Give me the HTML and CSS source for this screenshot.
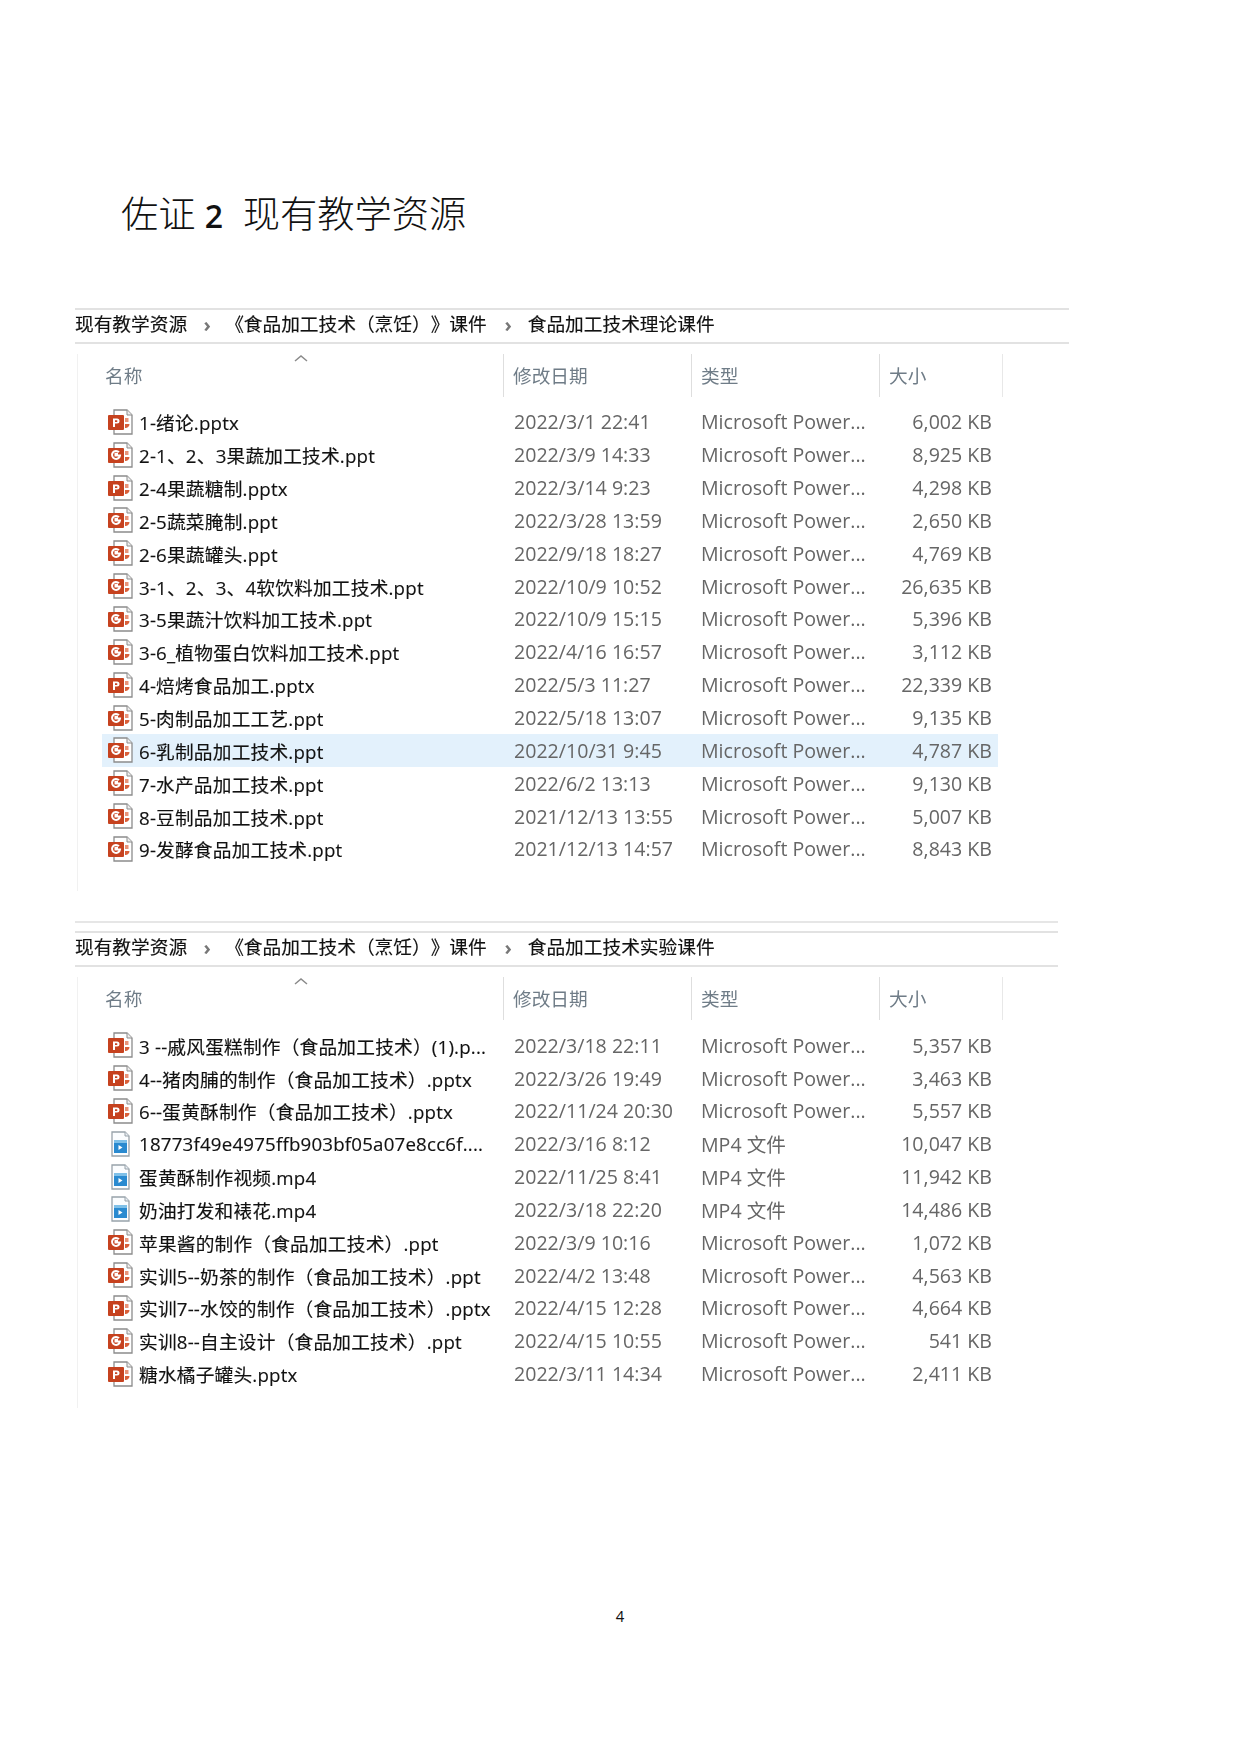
FILE: index.html
```html
<!DOCTYPE html>
<html lang="zh-CN">
<head>
<meta charset="utf-8">
<title>佐证 2 现有教学资源</title>
<link rel="stylesheet" href="styles.css">
</head>
<body>
<svg class="defs" width="0" height="0" aria-hidden="true">
  <symbol id="doc" viewBox="0 0 28 26">
    <path d="M8 1h13l5 5v19H8z" fill="#fff" stroke="#8c8c8c" stroke-width="1.300"/>
    <path d="M21 1v5h5" fill="#eee" stroke="#8c8c8c" stroke-width="1"/>
    <path d="M19 9h3.500v4h-3.500z" fill="#e8957a"/>
    <path d="M19 15h4.500a4 4 0 0 1-4.500 4z" fill="#d9603a"/>
    <rect x="2" y="6" width="16" height="15" rx="1" fill="#c6421f"/>
  </symbol>
  <symbol id="pptx" viewBox="0 0 28 26">
    <use href="#doc"/>
    <path d="M7 9.500h4a2.500 2.500 0 0 1 0 5h-2v3.500h-2zM9 11.200v1.700h1.600a.85.85 0 0 0 0-1.700z" fill="#fff"/>
  </symbol>
  <symbol id="ppt" viewBox="0 0 28 26">
    <use href="#doc"/>
    <path d="M13 10.200a4 4 0 1 0 1 3.300h-4.500v-1.800h2.500" fill="none" stroke="#fff" stroke-width="2"/>
  </symbol>
  <symbol id="mp4" viewBox="0 0 28 26">
    <path d="M6 1h13l4 4v20H6z" fill="#fbfdff" stroke="#98a2aa" stroke-width="1.300"/>
    <path d="M19 1v4h4" fill="#e8eef3" stroke="#98a2aa"/>
    <rect x="8" y="9" width="13" height="13" fill="#2a8ad0"/>
    <rect x="8" y="9" width="13" height="3" fill="#7fc0e8"/>
    <path d="M12.500 14l4 2.500-4 2.500z" fill="#fff"/>
  </symbol>
</svg>

<main class="page">
  <h1 class="title">佐证 <span class="num">2</span>&nbsp; 现有教学资源</h1>

  <section class="explorer wide">
    <nav class="crumbs"><span>现有教学资源</span><i class="sep">›</i><span class="book">《食品加工技术（烹饪）》课件</span><i class="sep">›</i><span>食品加工技术理论课件</span></nav>
    <div class="pane">
      <div class="head">
        <svg class="sort" viewBox="0 0 14 8"><path d="M1 7l6-5 6 5" fill="none" stroke="#8a8a8a" stroke-width="1.500"/></svg>
        <span class="h-name">名称</span><span class="h-col">修改日期</span><span class="h-col">类型</span><span class="h-col">大小</span>
      </div>
      <div class="rows">
        <div class="row"><svg class="ic"><use href="#pptx"/></svg><span class="n">1-绪论.pptx</span><span class="d">2022/3/1 22:41</span><span class="t">Microsoft Power...</span><span class="s">6,002 KB</span></div>
        <div class="row"><svg class="ic"><use href="#ppt"/></svg><span class="n">2-1、2、3果蔬加工技术.ppt</span><span class="d">2022/3/9 14:33</span><span class="t">Microsoft Power...</span><span class="s">8,925 KB</span></div>
        <div class="row"><svg class="ic"><use href="#pptx"/></svg><span class="n">2-4果蔬糖制.pptx</span><span class="d">2022/3/14 9:23</span><span class="t">Microsoft Power...</span><span class="s">4,298 KB</span></div>
        <div class="row"><svg class="ic"><use href="#ppt"/></svg><span class="n">2-5蔬菜腌制.ppt</span><span class="d">2022/3/28 13:59</span><span class="t">Microsoft Power...</span><span class="s">2,650 KB</span></div>
        <div class="row"><svg class="ic"><use href="#ppt"/></svg><span class="n">2-6果蔬罐头.ppt</span><span class="d">2022/9/18 18:27</span><span class="t">Microsoft Power...</span><span class="s">4,769 KB</span></div>
        <div class="row"><svg class="ic"><use href="#ppt"/></svg><span class="n">3-1、2、3、4软饮料加工技术.ppt</span><span class="d">2022/10/9 10:52</span><span class="t">Microsoft Power...</span><span class="s">26,635 KB</span></div>
        <div class="row"><svg class="ic"><use href="#ppt"/></svg><span class="n">3-5果蔬汁饮料加工技术.ppt</span><span class="d">2022/10/9 15:15</span><span class="t">Microsoft Power...</span><span class="s">5,396 KB</span></div>
        <div class="row"><svg class="ic"><use href="#ppt"/></svg><span class="n">3-6_植物蛋白饮料加工技术.ppt</span><span class="d">2022/4/16 16:57</span><span class="t">Microsoft Power...</span><span class="s">3,112 KB</span></div>
        <div class="row"><svg class="ic"><use href="#pptx"/></svg><span class="n">4-焙烤食品加工.pptx</span><span class="d">2022/5/3 11:27</span><span class="t">Microsoft Power...</span><span class="s">22,339 KB</span></div>
        <div class="row"><svg class="ic"><use href="#ppt"/></svg><span class="n">5-肉制品加工工艺.ppt</span><span class="d">2022/5/18 13:07</span><span class="t">Microsoft Power...</span><span class="s">9,135 KB</span></div>
        <div class="row selected"><svg class="ic"><use href="#ppt"/></svg><span class="n">6-乳制品加工技术.ppt</span><span class="d">2022/10/31 9:45</span><span class="t">Microsoft Power...</span><span class="s">4,787 KB</span></div>
        <div class="row"><svg class="ic"><use href="#ppt"/></svg><span class="n">7-水产品加工技术.ppt</span><span class="d">2022/6/2 13:13</span><span class="t">Microsoft Power...</span><span class="s">9,130 KB</span></div>
        <div class="row"><svg class="ic"><use href="#ppt"/></svg><span class="n">8-豆制品加工技术.ppt</span><span class="d">2021/12/13 13:55</span><span class="t">Microsoft Power...</span><span class="s">5,007 KB</span></div>
        <div class="row"><svg class="ic"><use href="#ppt"/></svg><span class="n">9-发酵食品加工技术.ppt</span><span class="d">2021/12/13 14:57</span><span class="t">Microsoft Power...</span><span class="s">8,843 KB</span></div>
      </div>
    </div>
  </section>

  <section class="explorer narrow">
    <nav class="crumbs"><span>现有教学资源</span><i class="sep">›</i><span class="book">《食品加工技术（烹饪）》课件</span><i class="sep">›</i><span>食品加工技术实验课件</span></nav>
    <div class="pane">
      <div class="head">
        <svg class="sort" viewBox="0 0 14 8"><path d="M1 7l6-5 6 5" fill="none" stroke="#8a8a8a" stroke-width="1.500"/></svg>
        <span class="h-name">名称</span><span class="h-col">修改日期</span><span class="h-col">类型</span><span class="h-col">大小</span>
      </div>
      <div class="rows">
        <div class="row"><svg class="ic"><use href="#pptx"/></svg><span class="n">3 --戚风蛋糕制作（食品加工技术）(1).p...</span><span class="d">2022/3/18 22:11</span><span class="t">Microsoft Power...</span><span class="s">5,357 KB</span></div>
        <div class="row"><svg class="ic"><use href="#pptx"/></svg><span class="n">4--猪肉脯的制作（食品加工技术）.pptx</span><span class="d">2022/3/26 19:49</span><span class="t">Microsoft Power...</span><span class="s">3,463 KB</span></div>
        <div class="row"><svg class="ic"><use href="#pptx"/></svg><span class="n">6--蛋黄酥制作（食品加工技术）.pptx</span><span class="d">2022/11/24 20:30</span><span class="t">Microsoft Power...</span><span class="s">5,557 KB</span></div>
        <div class="row"><svg class="ic"><use href="#mp4"/></svg><span class="n">18773f49e4975ffb903bf05a07e8cc6f....</span><span class="d">2022/3/16 8:12</span><span class="t">MP4 文件</span><span class="s">10,047 KB</span></div>
        <div class="row"><svg class="ic"><use href="#mp4"/></svg><span class="n">蛋黄酥制作视频.mp4</span><span class="d">2022/11/25 8:41</span><span class="t">MP4 文件</span><span class="s">11,942 KB</span></div>
        <div class="row"><svg class="ic"><use href="#mp4"/></svg><span class="n">奶油打发和裱花.mp4</span><span class="d">2022/3/18 22:20</span><span class="t">MP4 文件</span><span class="s">14,486 KB</span></div>
        <div class="row"><svg class="ic"><use href="#ppt"/></svg><span class="n">苹果酱的制作（食品加工技术）.ppt</span><span class="d">2022/3/9 10:16</span><span class="t">Microsoft Power...</span><span class="s">1,072 KB</span></div>
        <div class="row"><svg class="ic"><use href="#ppt"/></svg><span class="n">实训5--奶茶的制作（食品加工技术）.ppt</span><span class="d">2022/4/2 13:48</span><span class="t">Microsoft Power...</span><span class="s">4,563 KB</span></div>
        <div class="row"><svg class="ic"><use href="#pptx"/></svg><span class="n">实训7--水饺的制作（食品加工技术）.pptx</span><span class="d">2022/4/15 12:28</span><span class="t">Microsoft Power...</span><span class="s">4,664 KB</span></div>
        <div class="row"><svg class="ic"><use href="#ppt"/></svg><span class="n">实训8--自主设计（食品加工技术）.ppt</span><span class="d">2022/4/15 10:55</span><span class="t">Microsoft Power...</span><span class="s">541 KB</span></div>
        <div class="row"><svg class="ic"><use href="#pptx"/></svg><span class="n">糖水橘子罐头.pptx</span><span class="d">2022/3/11 14:34</span><span class="t">Microsoft Power...</span><span class="s">2,411 KB</span></div>
      </div>
    </div>
  </section>

  <footer class="pageno">4</footer>
</main>
</body>
</html>
```

FILE: styles.css
```css
html, body { margin: 0; padding: 0; background: #fff; }
.defs { display: block; height: 0; }
.page {
  width: 1240px;
  height: 1753px;
  box-sizing: border-box;
  padding: 188px 0 0 75px;
  display: flex;
  flex-direction: column;
  font-family: "Open Sans", "Noto Sans CJK SC", sans-serif;
  text-spacing-trim: space-all;
}
.title {
  margin: 0 0 0 46px;
  height: 48px;
  line-height: 48px;
  font-family: "Noto Sans CJK SC", sans-serif;
  font-size: 37.300px;
  font-weight: 300;
  color: #111;
  white-space: pre;
}
.num { font-family: "Open Sans", sans-serif; font-weight: 600; font-size: 32px; margin: 0 3px 0 1px; }

.explorer { filter: blur(0.4px); }
.explorer.wide { width: 994px; margin-top: 72px; }
.explorer.narrow { width: 983px; margin-top: 30px; border-top: 2px solid #e6e6e6; padding-top: 8px; }

.crumbs {
  height: 32px;
  border-top: 2px solid #e2e2e2;
  border-bottom: 2px solid #e2e2e2;
  display: flex;
  align-items: center;
  font-size: 18.700px;
  line-height: 28px;
  color: #111;
  white-space: nowrap;
}
.crumbs span { position: relative; top: -2px; -webkit-text-stroke: 0.15px #111; }
.sep { box-sizing: border-box; font-style: normal; color: #777; width: 44px; text-align: center; font-size: 20px; font-weight: 700; position: relative; top: -1px; padding-right: 4px; }
.book + .sep { padding-right: 0; padding-left: 5px; }
.book { margin-left: -6px; margin-right: -3px; }

.pane {
  margin-top: 10px;
  margin-left: 2px;
  width: 934px;
  border-left: 1px solid #f1f1f1;
  padding-bottom: 26px;
}
.narrow .pane { padding-bottom: 18px; }
.head {
  position: relative;
  height: 42px;
  display: grid;
  grid-template-columns: 425px 188px 188px 124px;
  align-items: center;
  font-size: 18.700px;
  color: #6f7c87;
}
.h-name { padding-left: 27px; position: relative; top: -1px; }
.h-col { height: 100%; border-left: 1px solid #dedede; padding-left: 9px; line-height: 43px; box-sizing: border-box; }
.h-col:last-child { border-right: 1px solid #e8e8e8; }
.sort { position: absolute; left: 216px; top: 0; width: 14px; height: 8px; }

.rows { margin-top: 9.500px; margin-left: 24px; width: 896px; }
.row {
  height: 32.850px;
  display: grid;
  grid-template-columns: 37px 375px 187px 169px 123px;
  align-items: center;
  font-size: 19.600px;
  white-space: nowrap;
  color: #666;
}
.row.selected { background: #e3f1fc; }
.ic { width: 28px; height: 26px; margin-left: 4px; }
.n { color: #111; font-size: 18.700px; letter-spacing: 0.2px; -webkit-text-stroke: 0.15px #111; }
.s { text-align: right; padding-right: 1px; }

.pageno {
  margin-top: auto;
  margin-bottom: 128px;
  width: 1090px;
  text-align: center;
  font-family: Lato, sans-serif;
  font-size: 15px;
  color: #111;
}
```
